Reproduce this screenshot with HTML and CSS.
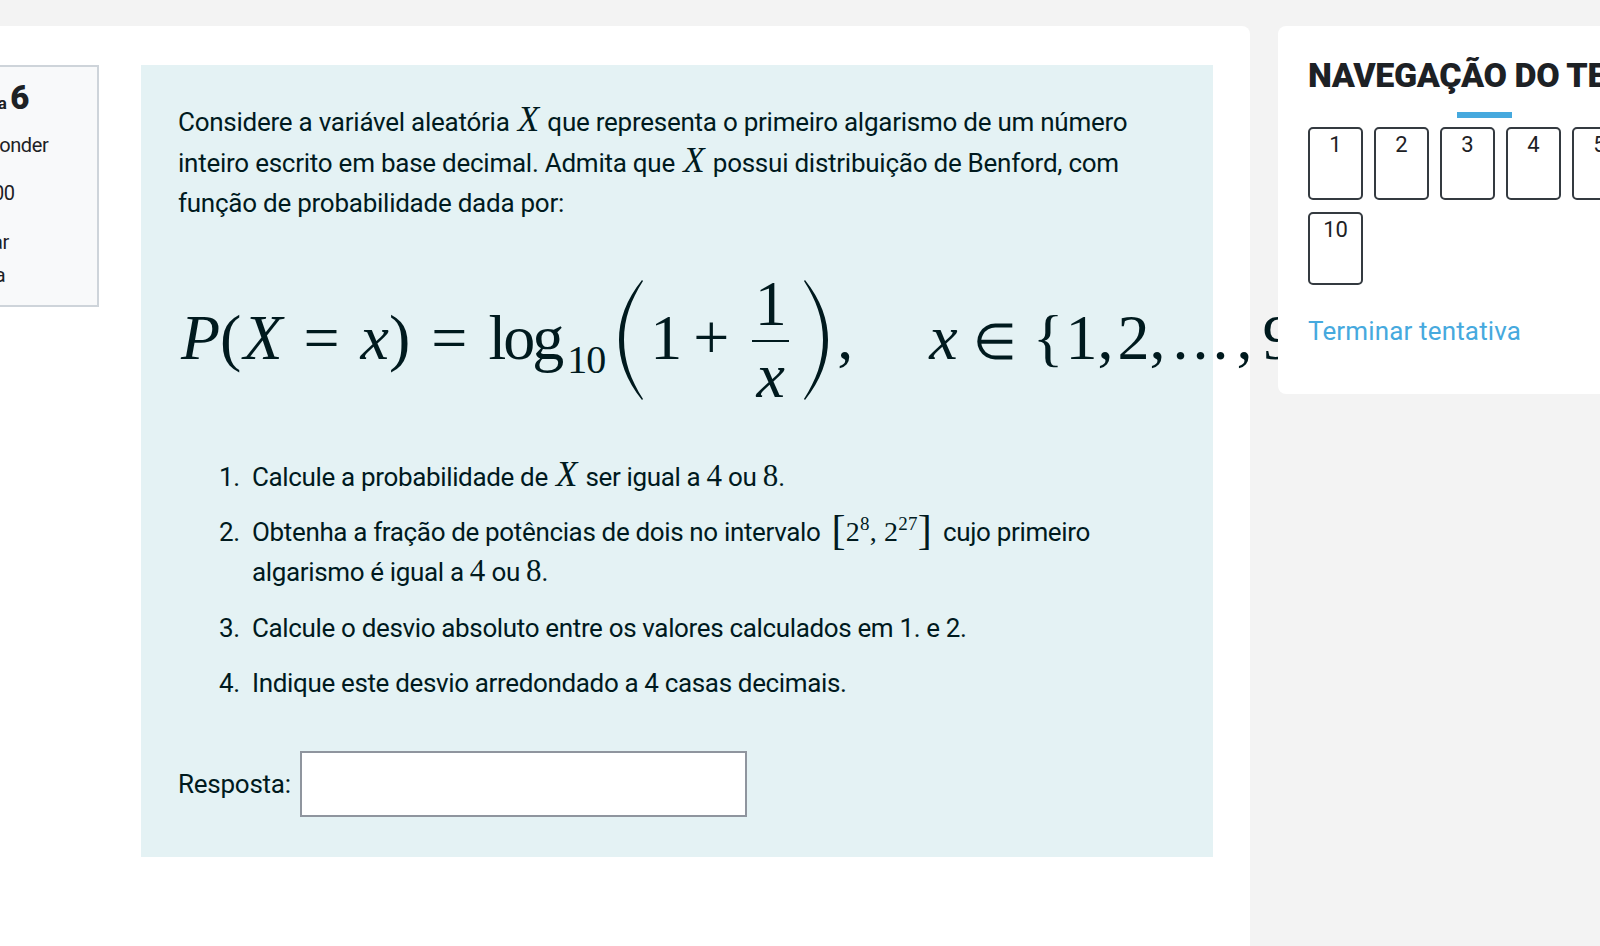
FILE: index.html
```html
<!DOCTYPE html>
<html lang="pt">
<head>
    <meta charset="utf-8">
    <title>Teste</title>
    <link rel="stylesheet" href="styles.css">
</head>
<body>
    <div class="page">
        <main class="main-card">
            <div class="question">
                <div class="info">
                    <h3 class="qno">Pergunta <span>6</span></h3>
                    <div class="state">Por responder</div>
                    <div class="grade">Nota: 1,00</div>
                    <div class="flag">Assinalar<br>pergunta</div>
                </div>
                <div class="content">
                    <p class="intro">Considere a variável aleatória <i class="mi">X</i> que representa o primeiro algarismo de um número inteiro escrito em base decimal. Admita que <i class="mi">X</i> possui distribuição de Benford, com função de probabilidade dada por:</p>

                    <div class="formula">
                        <span class="run"><i>P</i>(<i class="fx">X</i><span class="rel">=</span><i>x</i>)<span class="rel">=</span><span class="log">log</span><sub class="base">10</sub></span>
                        <svg class="paren open" width="26" height="120" viewBox="0 0 26 120">
                            <path d="M24 0 C8 20 1 40 1 60 C1 80 8 100 24 120 L25 119 C13 100 6 82 6 60 C6 38 13 20 25 1 Z"/>
                        </svg>
                        <span class="run one">1<span class="plus">+</span></span>
                        <span class="frac"><span class="num">1</span><i class="den">x</i></span>
                        <svg class="paren close" width="26" height="120" viewBox="0 0 26 120">
                            <path d="M2 0 C18 20 25 40 25 60 C25 80 18 100 2 120 L1 119 C13 100 20 82 20 60 C20 38 13 20 1 1 Z"/>
                        </svg>
                        <span class="run comma">,</span>
                        <span class="run set"><i>x</i><span class="in">∈</span>{<span class="nums">1, 2, <span class="dots">...</span> , <span class="last">9</span></span>}</span>
                    </div>

                    <ol class="items">
                        <li>Calcule a probabilidade de <i class="mi">X</i> ser igual a <span class="mn">4</span> ou <span class="mn">8</span>.</li>
                        <li>Obtenha a fração de potências de dois no intervalo <span class="mn interval"><span class="bracket">[</span>2<sup>8</sup>, 2<sup>27</sup><span class="bracket">]</span></span> cujo primeiro algarismo é igual a <span class="mn">4</span> ou <span class="mn">8</span>.</li>
                        <li>Calcule o desvio absoluto entre os valores calculados em 1. e 2.</li>
                        <li>Indique este desvio arredondado a 4 casas decimais.</li>
                    </ol>

                    <div class="answer">
                        <label for="resposta">Resposta:</label>
                        <input type="text" id="resposta">
                    </div>
                </div>
            </div>
        </main>

        <aside class="side-card">
            <h2>NAVEGAÇÃO DO TESTE</h2>
            <div class="underline"></div>
            <div class="nav-grid">
                <button>1</button>
                <button>2</button>
                <button>3</button>
                <button>4</button>
                <button>5</button>
                <button>6</button>
                <button>7</button>
                <button>8</button>
                <button>9</button>
                <button>10</button>
            </div>
            <a class="finish" href="#">Terminar tentativa</a>
        </aside>
    </div>
</body>
</html>
```

FILE: styles.css
```css
html, body {
    height: 100%;
}

body {
    margin: 0;
    background-color: #f3f3f3;
    font-family: Roboto, sans-serif;
    color: #001a1e;
    overflow: hidden;
}

.page {
    display: flex;
    align-items: flex-start;
    gap: 28px;
    width: 2100px;
    margin-left: -106px;
    padding-top: 26px;
}

.main-card {
    flex: none;
    box-sizing: border-box;
    width: 1356px;
    height: 960px;
    padding: 39px 37px 0 15px;
    background-color: #fff;
    border-radius: 8px;
}

.question {
    display: flex;
    gap: 42px;
}

.info {
    flex: none;
    box-sizing: border-box;
    width: 190px;
    height: 242px;
    padding: 11px 0 0 17px;
    background-color: #f8f9fa;
    border: 2px solid #ced4da;
    font-size: 20px;
    color: #1d2125;
    white-space: nowrap;
    letter-spacing: -0.4px;
}

.qno {
    margin: 0 0 16px 12px;
    font-size: 17px;
    font-weight: 700;
}

.qno span {
    font-size: 33px;
    font-weight: 900;
}

.state {
    margin-bottom: 24px;
}

.grade {
    margin-bottom: 21px;
}

.flag {
    line-height: 33px;
    letter-spacing: -0.2px;
}

.content {
    flex: none;
    box-sizing: border-box;
    width: 1072px;
    height: 792px;
    padding: 37px 37px 40px;
    background-color: #e4f2f4;
    font-size: 26px;
    line-height: 40.6px;
    letter-spacing: -0.25px;
}

.intro {
    margin: 0;
    width: 960px;
}

.mi {
    font-family: "Liberation Serif", serif;
    font-size: 35px;
    letter-spacing: 0;
    margin: 0 2px;
    line-height: 0;
}

.mn {
    font-family: "Liberation Serif", serif;
    font-size: 31px;
    letter-spacing: 0;
    line-height: 0;
}

.interval {
    font-size: 28px;
    margin: 0 5px 0 5px;
    letter-spacing: 0.2px;
}

.interval sup {
    font-size: 19px;
    line-height: 0;
    vertical-align: 11px;
}

.bracket {
    font-size: 42px;
    font-weight: 400;
    vertical-align: -3px;
    line-height: 0;
}

.formula {
    display: flex;
    align-items: center;
    height: 120px;
    margin: 56px 0 57px;
    padding-left: 3px;
    font-family: "Liberation Serif", serif;
    font-size: 64px;
    line-height: 1;
    letter-spacing: 0;
    white-space: nowrap;
}

.run {
    flex: none;
    padding-bottom: 4px;
}

.fx {
    margin-left: 2px;
}

.rel {
    margin: 0 21px;
}

.rel:last-of-type {
    margin-right: 25px;
}

.log {
    letter-spacing: -3px;
}

.base {
    font-size: 40px;
    line-height: 0;
    letter-spacing: -1px;
    vertical-align: -14px;
    margin-left: 6px;
}

.paren {
    flex: none;
    fill: #001a1e;
}

.open {
    margin: 0 10px 0 13px;
}

.close {
    margin: 0 8px 0 14px;
}

.one {
    margin-left: -4px;
}

.plus {
    margin: 0 23px 0 11px;
}

.frac {
    flex: none;
    display: flex;
    flex-direction: column;
    align-items: center;
    width: 37px;
}

.num {
    display: block;
    width: 100%;
    text-align: center;
    border-bottom: 2px solid #001a1e;
    padding-bottom: 4px;
}

.den {
    padding-top: 2px;
}

.comma {
    margin-right: 76px;
}

.in {
    margin: 0 16px 0 15px;
    font-size: 50px;
}

.nums {
    margin-left: 2px;
    word-spacing: -12px;
}

.dots {
    margin-left: 3px;
    letter-spacing: 4px;
}

.last {
    margin-left: 6px;
}

.items {
    margin: 0;
    padding-left: 74px;
    width: 900px;
    letter-spacing: -0.35px;
}

.items li {
    margin-bottom: 14.5px;
}

.items li::marker {
    content: counter(list-item) ".\00a0\00a0";
}

.answer {
    display: flex;
    align-items: center;
    gap: 9px;
    margin-top: 48px;
}

.answer input {
    box-sizing: border-box;
    width: 447px;
    height: 66px;
    background-color: #fff;
    border: 2px solid #8f959e;
}

.side-card {
    flex: none;
    position: relative;
    box-sizing: border-box;
    width: 700px;
    height: 368px;
    padding: 29px 30px 0;
    background-color: #fff;
    border-radius: 8px;
}

.side-card h2 {
    margin: 0;
    font-size: 34px;
    font-weight: 900;
    line-height: 40px;
    letter-spacing: -0.4px;
    color: #1d2125;
    white-space: nowrap;
}

.underline {
    width: 55px;
    height: 6px;
    margin: 17px 0 9px 149px;
    background-color: #46a9de;
}

.nav-grid {
    display: grid;
    grid-template-columns: repeat(9, 55px);
    grid-auto-rows: 73px;
    gap: 12px 11px;
}

.nav-grid button {
    box-sizing: border-box;
    padding: 3px 0 0;
    display: flex;
    justify-content: center;
    align-items: flex-start;
    background-color: #fff;
    border: 2px solid #343a40;
    border-radius: 5px;
    font-family: Roboto, sans-serif;
    font-size: 22px;
    color: #1d2125;
}

.finish {
    display: block;
    margin-top: 31px;
    font-size: 26px;
    letter-spacing: 0.15px;
    color: #46a9de;
    text-decoration: none;
}
```
